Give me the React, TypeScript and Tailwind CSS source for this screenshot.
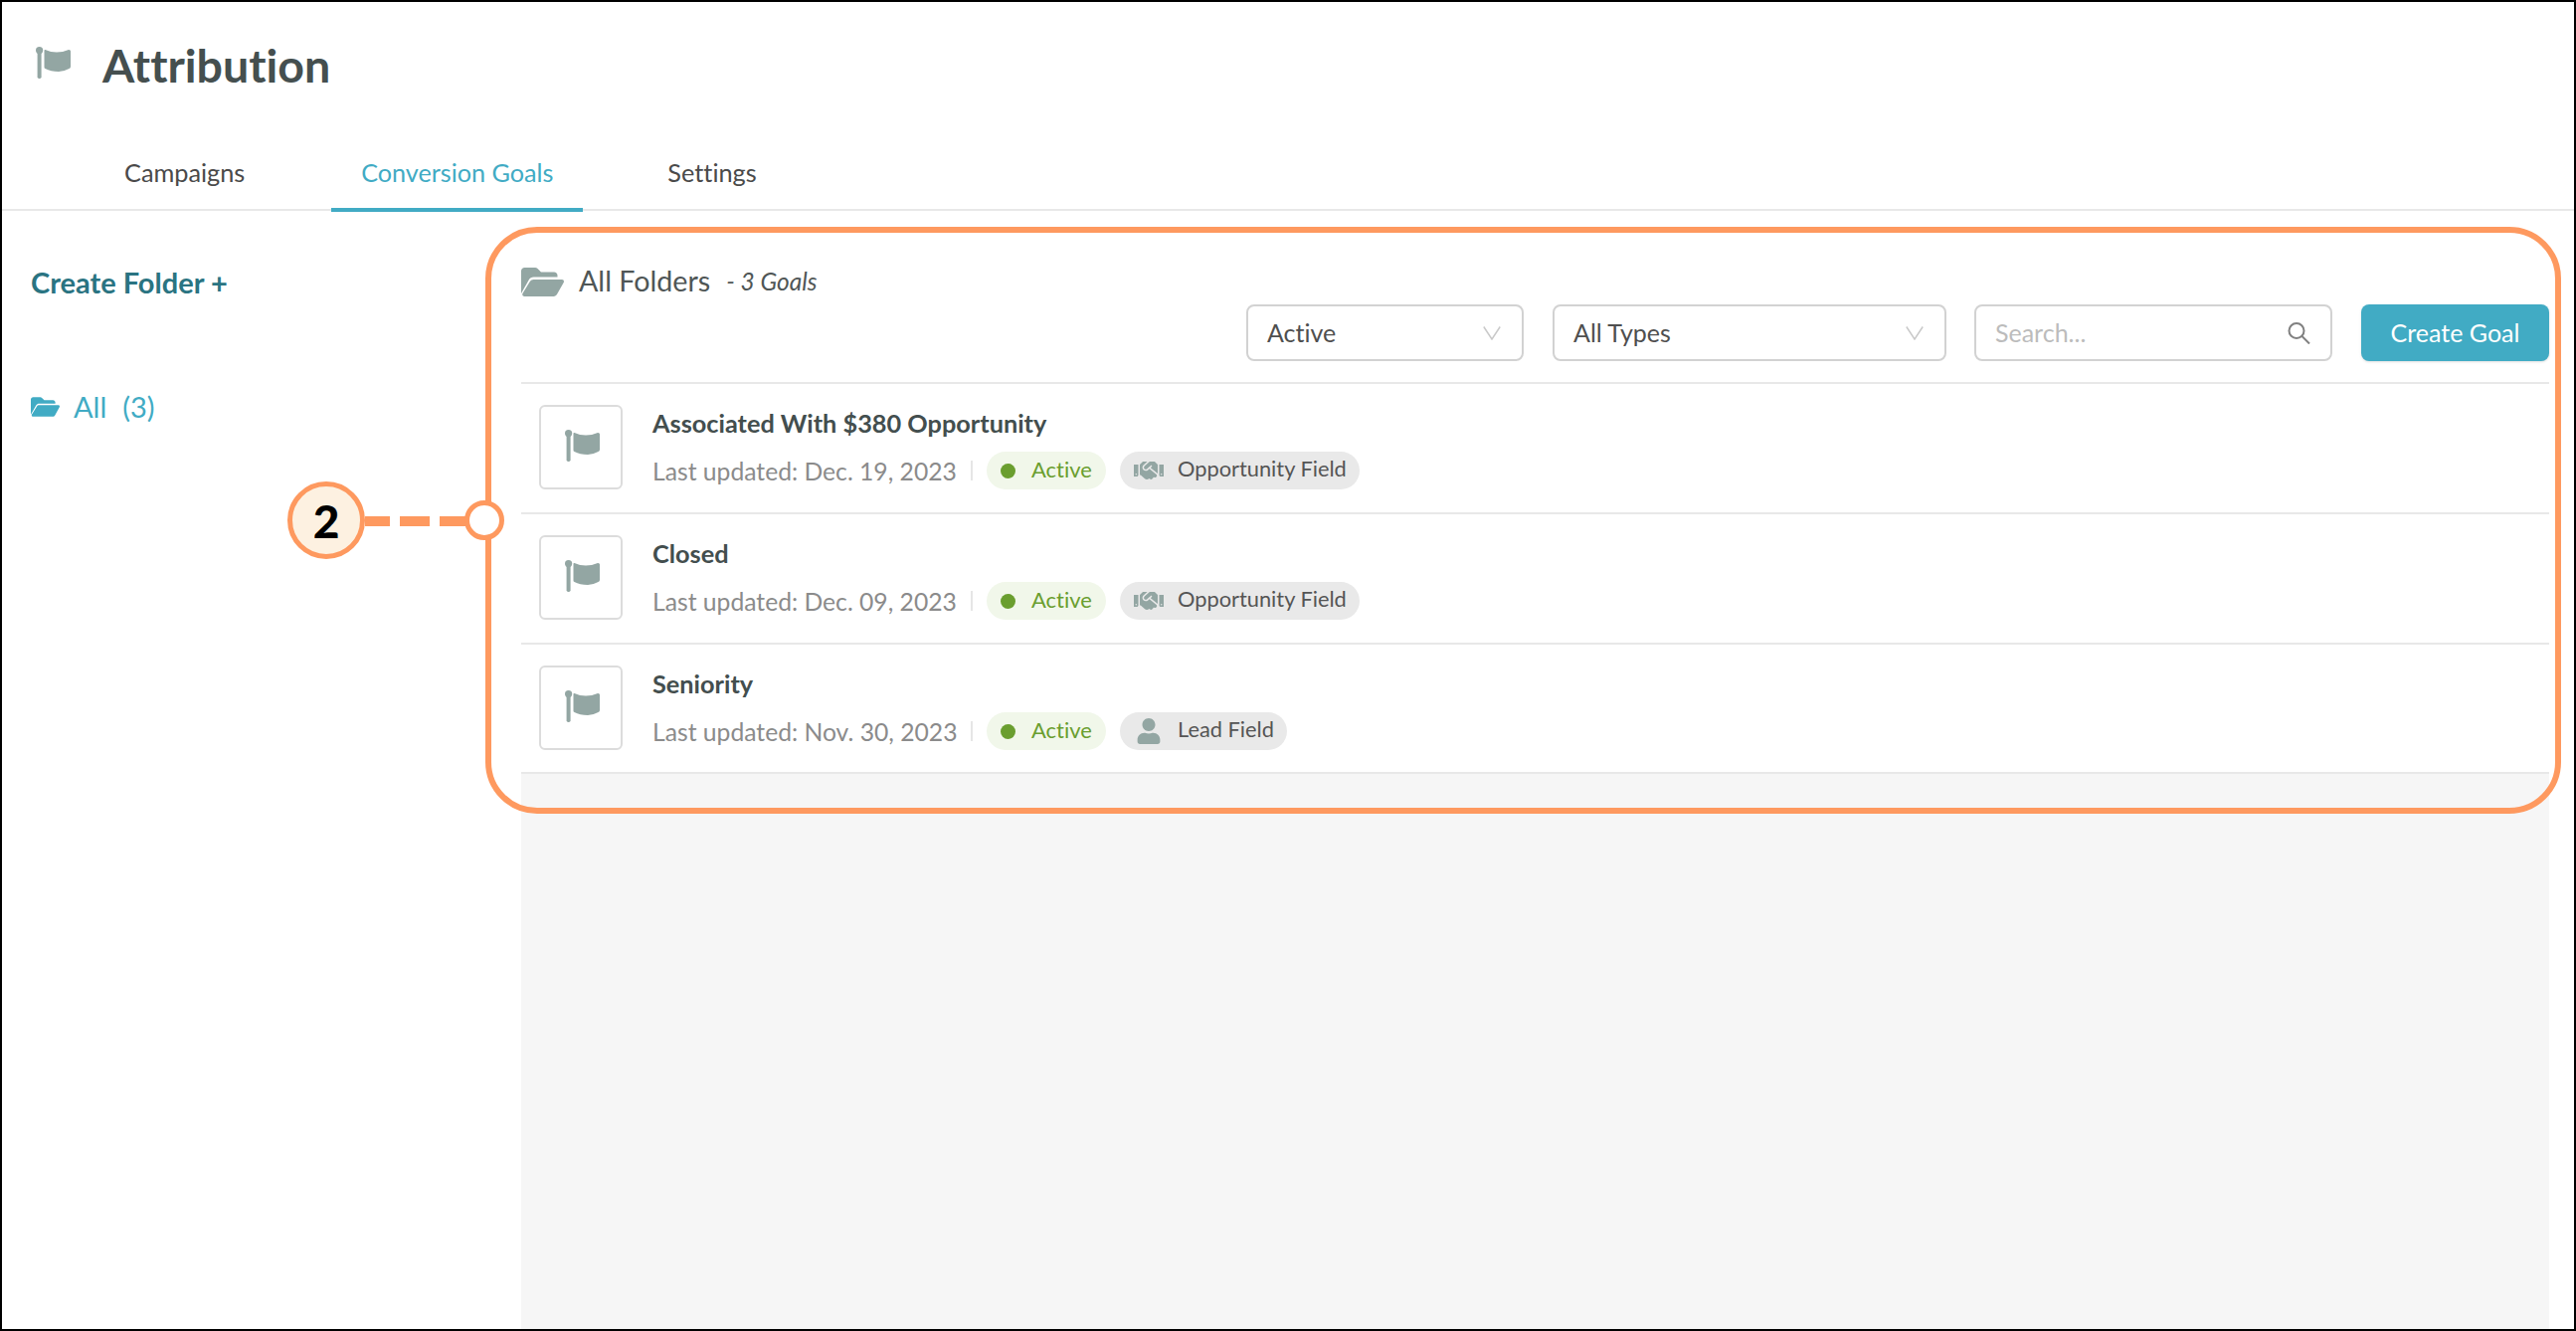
import { FaHandshake, FaUser } from "react-icons/fa";

function Flag({ className }: { className: string }) {
  return (
    <svg viewBox="0 0 35 32" className={className} fill="#93a6a3">
      <circle cx="3.6" cy="3.6" r="3.6" />
      <rect x="1.6" y="4" width="4" height="28" rx="1.8" />
      <path d="M9.5 3 Q15 5.5 21 5.5 T33 3 Q35 2.8 35 4.5 V20 Q35 21.4 33.5 22 Q28 25 23 25 Q15 25 9.5 22 Q8.5 21.5 8.5 20.5 V4 Q8.5 2.6 9.5 3 Z" />
    </svg>
  );
}

function FolderOpen({ className }: { className: string }) {
  return (
    <svg viewBox="0 0 43 29" className={className} fill="currentColor">
      <path d="M0 3.5C0 1.5 1.5 0 3.5 0h10.5c1 0 1.8.4 2.5 1l3.5 3.5h13c2 0 3.5 1.5 3.5 3.5v1.5H12.5c-2 0-3.7 1-4.7 2.8L0 26V3.5z" />
      <path d="M12.5 12H41c1.6 0 2.5 1.6 1.7 3l-6.5 11.6c-.8 1.4-2 2.4-3.7 2.4H3.5C1.6 29 .6 27.4 1.6 25.7L8.8 14c.8-1.2 2.2-2 3.7-2z" />
    </svg>
  );
}

function Chevron({ className }: { className: string }) {
  return (
    <svg viewBox="0 0 18 14" className={className} fill="none" stroke="#c9c9c9" strokeWidth="1.5">
      <path d="M0.8 0.5 9 13 17.2 0.5" />
    </svg>
  );
}

function Glass() {
  return (
    <svg viewBox="0 0 23 22" className="h-[22px] w-[23px]" fill="none" stroke="#808080" strokeWidth="2">
      <circle cx="9" cy="8.5" r="7.5" />
      <path d="M14.5 14 22 21.5" />
    </svg>
  );
}

function Select({ label, width }: { label: string; width: string }) {
  return (
    <div className={`flex h-[57px] items-center justify-between rounded-[8px] border-2 border-[#d2d2d2] pl-[19px] pr-[21px] ${width}`}>
      <span className="text-[25px] text-[#4f4f4f]">{label}</span>
      <Chevron className="h-[14px] w-[18px]" />
    </div>
  );
}

function Row({ title, date, kind, last }: { title: string; date: string; kind: "opp" | "lead"; last?: boolean }) {
  return (
    <div className={`flex items-start border-b-2 border-[#e8e8e8] bg-white pl-[18px] pt-[21px] ${last ? "h-[130px]" : "h-[131px]"}`}>
      <div className="flex h-[85px] w-[84px] shrink-0 items-center justify-center rounded-[6px] border-2 border-[#dcdcdc] pb-[4px] pl-[2px]">
        <Flag className="h-[32px] w-[35px]" />
      </div>
      <div className="ml-[30px] flex flex-col">
        <div className="mt-[1px] text-[25.3px] leading-[34px] font-bold text-[#434e4e]">{title}</div>
        <div className="mt-[12px] flex h-[38px] items-center">
          <span className="mt-[1px] w-[305px] text-[24.7px] whitespace-nowrap text-[#8b8b8b]">{date}</span>
          <span className="ml-[15px] h-[20px] w-[2px] bg-[#e6e6e6]" />
          <div className="ml-[14px] flex h-[38px] w-[120px] items-center rounded-full bg-[#f1f7ea] pl-[14px]">
            <span className="h-[15px] w-[15px] rounded-full bg-[#6a9e2f]" />
            <span className="mb-[3px] ml-[16px] text-[22px] text-[#6a9e2f]">Active</span>
          </div>
          {kind === "opp" ? (
            <div className="ml-[14px] flex h-[38px] w-[241px] items-center rounded-full bg-[#e9e9e9] pl-[14px]">
              <FaHandshake className="h-[30px] w-[30px] text-[#93a6a3]" />
              <span className="mb-[3px] ml-[14px] text-[21.8px] whitespace-nowrap text-[#555555]">Opportunity Field</span>
            </div>
          ) : (
            <div className="ml-[14px] flex h-[38px] w-[168px] items-center rounded-full bg-[#e9e9e9] pl-[17px]">
              <FaUser className="h-[26px] w-[24px] text-[#93a6a3]" />
              <span className="mb-[3px] ml-[17px] text-[21.8px] whitespace-nowrap text-[#555555]">Lead Field</span>
            </div>
          )}
        </div>
      </div>
    </div>
  );
}

export default function App() {
  return (
    <div className="relative flex h-[1338px] w-[2590px] flex-col overflow-hidden border-2 border-black bg-white font-['Lato',sans-serif] [font-variant-ligatures:none]">
      <div className="flex h-[126px] shrink-0 items-start pl-[34px] pt-[35px]">
        <Flag className="mt-[10px] h-[32px] w-[35px]" />
        <h1 className="ml-[32px] text-[46.5px] leading-[56px] font-bold text-[#454f4f]">Attribution</h1>
      </div>
      <div className="relative z-10 flex h-[84px] shrink-0 border-b-2 border-[#e8e8e8] pl-[123px]">
        <div className="text-[25.3px] leading-[90px] text-[#4a4a4a]">Campaigns</div>
        <div className="ml-[87px] flex h-[85px] w-[253px] justify-center border-b-4 border-[#41abc4] text-[25.2px] leading-[90px] text-[#41abc4]">
          Conversion Goals
        </div>
        <div className="ml-[85px] text-[25.3px] leading-[90px] text-[#4a4a4a]">Settings</div>
      </div>
      <div className="flex min-h-0 flex-1">
        <aside className="w-[522px] shrink-0 pl-[29px]">
          <div className="mt-[54px] text-[29px] leading-[36px] font-bold text-[#2a7482]">Create Folder +</div>
          <div className="mt-[89px] flex items-center text-[29px] leading-[36px] text-[#41abc4]">
            <FolderOpen className="h-[20px] w-[29px]" />
            <span className="ml-[14px]">All</span>
            <span className="ml-[16px]">(3)</span>
          </div>
        </aside>
        <main className="flex w-[2039px] shrink-0 flex-col bg-[#f6f6f6]">
          <div className="h-[174px] shrink-0 border-b-2 border-[#e8e8e8] bg-white">
            <div className="flex h-[94px] items-end pb-[2px]">
              <div className="flex h-[42px] items-center">
                <FolderOpen className="h-[29px] w-[43px] text-[#93a6a3]" />
                <span className="ml-[15px] text-[28.7px] text-[#4f5656]">All Folders</span>
                <span className="ml-[16px] text-[24.5px] text-[#4f5656] italic">- 3 Goals</span>
              </div>
            </div>
            <div className="flex h-[57px] items-center justify-end">
              <Select label="Active" width="w-[279px]" />
              <div className="w-[29px]" />
              <Select label="All Types" width="w-[396px]" />
              <div className="w-[28px]" />
              <div className="flex h-[57px] w-[360px] items-center justify-between rounded-[8px] border-2 border-[#d2d2d2] pl-[19px] pr-[20px]">
                <span className="text-[25px] text-[#bcbcbc]">Search...</span>
                <Glass />
              </div>
              <div className="w-[29px]" />
              <button className="h-[57px] w-[189px] rounded-[8px] bg-[#41abc4] text-[25px] text-white shadow-sm">Create Goal</button>
            </div>
          </div>
          <Row title="Associated With $380 Opportunity" date="Last updated: Dec. 19, 2023" kind="opp" />
          <Row title="Closed" date="Last updated: Dec. 09, 2023" kind="opp" />
          <Row title="Seniority" date="Last updated: Nov. 30, 2023" kind="lead" last />
        </main>
      </div>

      {/* Annotation overlay */}
      <div className="absolute left-[486px] top-[226px] z-20 h-[590px] w-[2087px] rounded-[52px] border-[6px] border-[#fe995f]" />
      <div className="absolute left-[287px] top-[482px] z-20 flex h-[78px] w-[78px] items-center justify-center rounded-full border-[5px] border-[#fe995f] bg-[#fdf1e1] text-[46px] font-black text-black">
        2
      </div>
      <div className="absolute left-[365px] top-[517px] z-20 h-[10px] w-[25px] bg-[#fe995f]" />
      <div className="absolute left-[400px] top-[517px] z-20 h-[10px] w-[30px] bg-[#fe995f]" />
      <div className="absolute left-[440px] top-[517px] z-20 h-[10px] w-[28px] bg-[#fe995f]" />
      <div className="absolute left-[465px] top-[501px] z-20 h-[40px] w-[40px] rounded-full border-[5px] border-[#fe995f] bg-white" />
    </div>
  );
}
